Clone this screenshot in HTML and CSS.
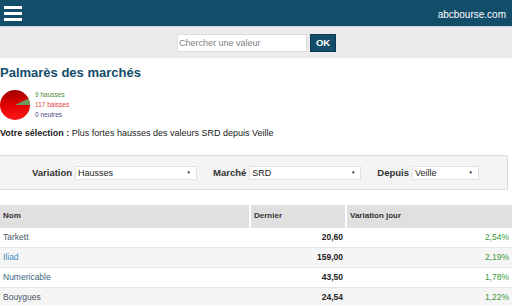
FILE: index.html
```html
<!DOCTYPE html>
<html lang="fr">
<head>
<meta charset="utf-8">
<title>Palmarès des marchés</title>
<link rel="stylesheet" href="styles.css">
</head>
<body>
<header class="topbar">
  <div class="burger"><span></span><span></span><span></span></div>
  <div class="brand">abcbourse.com</div>
</header>
<div class="searchbar">
  <input class="search-input" type="text" placeholder="Chercher une valeur">
  <button class="search-btn">OK</button>
</div>
<h1 class="title">Palmarès des marchés</h1>
<div class="summary">
  <svg class="pie" width="30" height="30" viewBox="0 0 30 30">
    <defs>
      <linearGradient id="rg" x1="0" y1="0" x2="0" y2="1">
        <stop offset="0" stop-color="#a00000"/>
        <stop offset="0.5" stop-color="#e00000"/>
        <stop offset="1" stop-color="#ff1a1a"/>
      </linearGradient>
    </defs>
    <circle cx="15" cy="15" r="15" fill="url(#rg)"/>
    <path d="M15 15 L30 15 A15 15 0 0 0 28.5 8.4 Z" fill="#6f9a5e"/>
  </svg>
  <div class="legend">
    <div class="up">9 hausses</div>
    <div class="down">117 baisses</div>
    <div class="flat">0 neutres</div>
  </div>
</div>
<p class="selection"><b>Votre sélection :</b> Plus fortes hausses des valeurs SRD depuis Veille</p>
<div class="filters">
  <label class="flabel">Variation</label>
  <div class="select w-var">Hausses<span class="arrow">▼</span></div>
  <label class="flabel">Marché</label>
  <div class="select w-mar">SRD<span class="arrow">▼</span></div>
  <label class="flabel">Depuis</label>
  <div class="select w-dep">Veille<span class="arrow">▼</span></div>
</div>
<table class="grid">
  <thead>
    <tr><th class="c-nom">Nom</th><th class="c-der">Dernier</th><th class="c-var">Variation jour</th></tr>
  </thead>
  <tbody>
    <tr><td class="n n1">Tarkett</td><td class="v">20,60</td><td class="p">2,54%</td></tr>
    <tr><td class="n n2">Iliad</td><td class="v">159,00</td><td class="p">2,19%</td></tr>
    <tr><td class="n n3">Numericable</td><td class="v">43,50</td><td class="p">1,78%</td></tr>
    <tr><td class="n n1">Bouygues</td><td class="v">24,54</td><td class="p">1,22%</td></tr>
  </tbody>
</table>
</body>
</html>
```
FILE: styles.css
```css
* { box-sizing: border-box; }
body {
  margin: 0;
  font-family: "Liberation Sans", Arial, sans-serif;
  color: #222;
  background: #fff;
}
.topbar {
  height: 27px;
  background: #124d6a;
  display: flex;
  align-items: center;
  justify-content: space-between;
  padding: 0 6px 0 4px;
  border-bottom: 1px solid #cfd6da;
}
.burger {
  display: flex;
  flex-direction: column;
  gap: 3px;
  width: 18px;
}
.burger span {
  display: block;
  height: 3px;
  background: #fff;
}
.brand {
  color: #fff;
  font-size: 10px;
  margin-top: 2px;
}
.searchbar {
  height: 31px;
  background: #ebebeb;
  display: flex;
  justify-content: center;
  align-items: center;
  gap: 3px;
  padding-left: 1px;
}
.search-input {
  width: 130px;
  height: 18px;
  border: 1px solid #dcdcdc;
  font-family: "Liberation Sans", Arial, sans-serif;
  font-size: 9px;
  padding: 0 1px;
  margin: 0;
}
.search-input::placeholder { color: #808080; }
.search-btn {
  width: 26px;
  height: 18px;
  margin: 0;
  border: 1px solid #0d3a52;
  background: #124d6a;
  color: #fff;
  font-family: "Liberation Sans", Arial, sans-serif;
  font-weight: bold;
  font-size: 9.5px;
  padding: 0;
}
.title {
  margin: 7px 0 0 0;
  font-size: 13px;
  line-height: 15px;
  color: #124d6a;
}
.summary {
  display: flex;
  align-items: center;
  gap: 5px;
  margin-top: 10px;
}
.pie { display: block; }
.legend {
  font-size: 6.5px;
  line-height: 10px;
  margin-top: -1px;
}
.up { color: #4a8a3a; }
.down { color: #e63b3b; }
.flat { color: #4a4a8a; }
.selection {
  margin: 7px 0 0 0;
  font-size: 9px;
  line-height: 12px;
}
.filters {
  margin: 16px 4px 0 0;
  height: 35px;
  background: #f4f4f4;
  border: 1px solid #dcdcdc;
  border-left: none;
  display: flex;
  align-items: center;
  justify-content: center;
  padding-left: 4px;
}
.flabel {
  font-size: 9.5px;
  font-weight: bold;
  color: #333;
  margin-right: 3px;
}
.select {
  height: 14px;
  background: #fff;
  border: 1px solid #e2e2e2;
  font-size: 9px;
  line-height: 12px;
  padding-left: 2px;
  position: relative;
  color: #222;
  margin-right: 16px;
}
.select:last-child { margin-right: 0; }
.arrow {
  position: absolute;
  right: 5px;
  top: 0;
  font-size: 4.5px;
  color: #222;
}
.w-var { width: 122px; }
.w-mar { width: 112px; }
.w-dep { width: 67px; }
.grid {
  margin-top: 15px;
  width: 100%;
  border-collapse: collapse;
  font-size: 8px;
}
.grid th {
  background: #e0e0e0;
  height: 22px;
  text-align: left;
  font-weight: bold;
  color: #333;
  padding: 0 3px;
  border-left: 2px solid #fff;
}
.grid th:first-child { border-left: none; }
.c-nom { width: 250px; }
.c-der { width: 96px; }
.grid td {
  height: 20px;
  padding: 0 3px;
  border-top: 1px solid #e6e6e6;
}
.grid tbody tr:nth-child(even) td { background: #f5f5f5; }
.n { font-size: 8.5px; }
.n1 { color: #4a5866; }
.n2 { color: #3b8ec2; }
.n3 { color: #3a6584; }
.v {
  text-align: right;
  font-weight: bold;
  color: #222;
  font-size: 8.5px;
}
.p {
  text-align: right;
  color: #3a9a3a;
  font-size: 8.5px;
}
```
